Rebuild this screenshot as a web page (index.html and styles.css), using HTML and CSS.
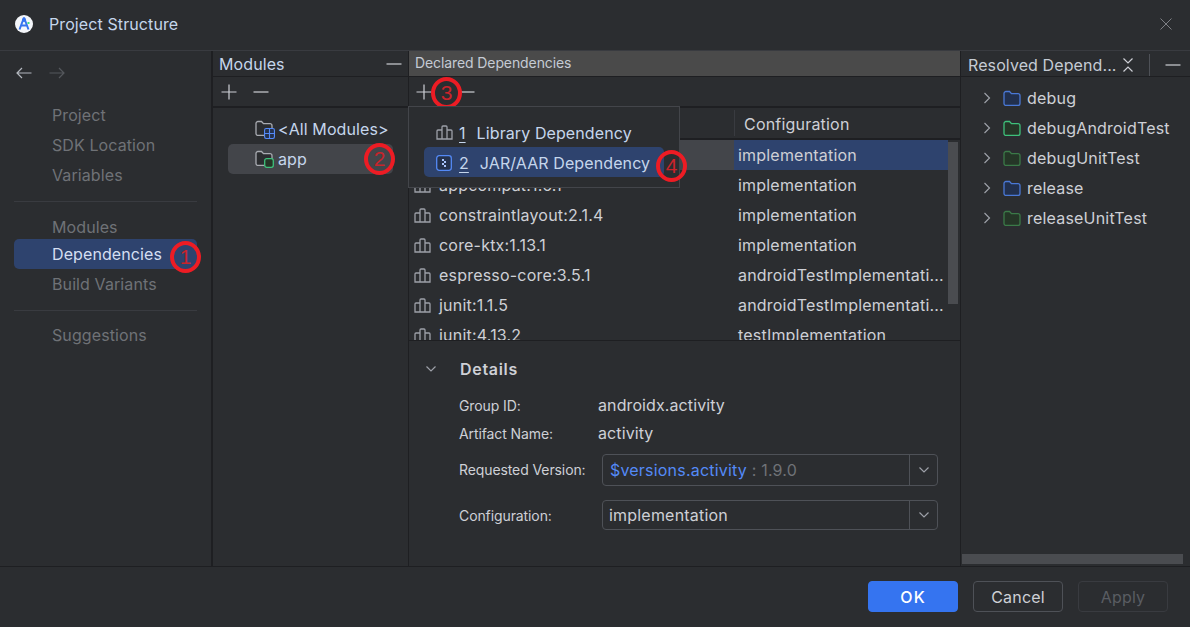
FILE: index.html
```html
<!DOCTYPE html>
<html lang="en">
<head>
<meta charset="utf-8">
<title>Project Structure</title>
<link rel="stylesheet" href="styles.css">
</head>
<body>
<svg class="defs" width="0" height="0" aria-hidden="true">
  <defs>
    <symbol id="lib" viewBox="0 0 17 15"><path d="M1 14V6a1 1 0 0 1 1-1h4V2a1 1 0 0 1 1-1h3a1 1 0 0 1 1 1v3h4a1 1 0 0 1 1 1v8zM6 5v9M11 5v9" fill="none" stroke="currentColor" stroke-width="1.300"/></symbol>
    <symbol id="folder" viewBox="0 0 18 16"><path d="M1 3.500A2 2 0 0 1 3 1.500H6.500l2 2.200h6.500a2 2 0 0 1 2 2v7.800a2 2 0 0 1-2 2H3a2 2 0 0 1-2-2z" fill="var(--fill)" stroke="currentColor" stroke-width="1.300"/></symbol>
    <symbol id="chev" viewBox="0 0 8 12"><path d="M1.500 1l5 5-5 5" fill="none" stroke="currentColor" stroke-width="1.200"/></symbol>
    <symbol id="down" viewBox="0 0 12 8"><path d="M1.500 1.500l4.500 4.500 4.500-4.500" fill="none" stroke="currentColor" stroke-width="1.200"/></symbol>
    <symbol id="plus" viewBox="0 0 16 16"><path d="M8 0.500v15M0.500 8h15" fill="none" stroke="currentColor" stroke-width="1.200"/></symbol>
    <symbol id="minus" viewBox="0 0 16 16"><path d="M0.500 8h15" fill="none" stroke="currentColor" stroke-width="1.200"/></symbol>
  </defs>
</svg>
<div class="window">
  <header class="titlebar">
    <svg class="logo" viewBox="0 0 20 20" width="20" height="20"><circle cx="10" cy="10" r="9" fill="#f4f6fa"/><path d="M10 3.500L5.500 15.500M10 3.500l4.500 12M6.500 11.500h7" fill="none" stroke="#3574f0" stroke-width="2"/><circle cx="10" cy="6" r="2" fill="#3574f0"/><rect x="13.500" y="8" width="2" height="2" fill="#3ddc84"/></svg>
    <span class="title">Project Structure</span>
    <svg class="close" viewBox="0 0 12 12" width="12" height="12"><path d="M.5.500l11 11M11.500.500l-11 11" stroke="#7e8085" fill="none"/></svg>
  </header>
  <main class="main">
    <nav class="sidebar">
      <div class="history">
        <svg viewBox="0 0 16 12" width="16" height="12"><path d="M15.500 6H1M6 1L1 6l5 5" fill="none" stroke="#b4b8bf" stroke-width="1.200"/></svg>
        <svg viewBox="0 0 16 12" width="16" height="12"><path d="M.5 6H15M10 1l5 5-5 5" fill="none" stroke="#55585d" stroke-width="1.200"/></svg>
      </div>
      <ul class="navgroup">
        <li>Project</li><li>SDK Location</li><li>Variables</li>
      </ul>
      <hr class="navsep">
      <ul class="navgroup">
        <li class="navcompact">Modules</li>
        <li class="navactive">Dependencies<span class="mark mark-nav">1</span></li>
        <li>Build Variants</li>
      </ul>
      <hr class="navsep">
      <ul class="navgroup navlast">
        <li>Suggestions</li>
      </ul>
    </nav>

    <section class="modules">
      <div class="panehead">
        <span>Modules</span>
        <svg class="i16 hide-btn" width="16" height="16"><use href="#minus"/></svg>
      </div>
      <div class="toolbar">
        <svg class="i16" width="16" height="16"><use href="#plus"/></svg>
        <svg class="i16" width="16" height="16"><use href="#minus"/></svg>
      </div>
      <ul class="modlist">
        <li class="modrow">
          <span class="modicon">
            <svg class="icon-folder gray" width="18" height="16"><use href="#folder"/></svg>
            <svg class="badge" viewBox="0 0 10 10" width="11" height="11"><rect x=".5" y=".5" width="9" height="9" rx="1.500" fill="#25324d" stroke="#548af7"/><path d="M5 .5v9M.5 5h9" stroke="#548af7"/></svg>
          </span>&lt;All Modules&gt;
        </li>
        <li class="modrow modsel">
          <span class="modicon">
            <svg class="icon-folder gray" width="18" height="16"><use href="#folder"/></svg>
            <svg class="badge" viewBox="0 0 10 10" width="10" height="10"><rect x=".7" y=".7" width="8.600" height="8.600" rx="2" fill="#253627" stroke="#3ec07a" stroke-width="1.300"/></svg>
          </span>app<span class="mark mark-mod">2</span>
        </li>
      </ul>
    </section>

    <section class="declared">
      <div class="dechead">Declared Dependencies</div>
      <div class="dectools">
        <svg class="i16" width="16" height="16"><use href="#plus"/></svg>
        <svg class="i16" width="16" height="16"><use href="#minus"/></svg>
        <span class="mark mark-add">3</span>
      </div>
      <div class="deptable">
        <div class="depheader"><span class="hname"></span><span class="hconf">Configuration</span></div>
        <div class="deprows">
          <div class="dep depsel"><span class="dname"><svg class="lib" width="17" height="15"><use href="#lib"/></svg>activity:1.9.0</span><span class="dconf">implementation</span></div>
          <div class="dep"><span class="dname"><svg class="lib" width="17" height="15"><use href="#lib"/></svg>appcompat:1.6.1</span><span class="dconf">implementation</span></div>
          <div class="dep"><span class="dname"><svg class="lib" width="17" height="15"><use href="#lib"/></svg>constraintlayout:2.1.4</span><span class="dconf">implementation</span></div>
          <div class="dep"><span class="dname"><svg class="lib" width="17" height="15"><use href="#lib"/></svg>core-ktx:1.13.1</span><span class="dconf">implementation</span></div>
          <div class="dep"><span class="dname"><svg class="lib" width="17" height="15"><use href="#lib"/></svg>espresso-core:3.5.1</span><span class="dconf">androidTestImplementati...</span></div>
          <div class="dep"><span class="dname"><svg class="lib" width="17" height="15"><use href="#lib"/></svg>junit:1.1.5</span><span class="dconf">androidTestImplementati...</span></div>
          <div class="dep"><span class="dname"><svg class="lib" width="17" height="15"><use href="#lib"/></svg>junit:4.13.2</span><span class="dconf">testImplementation</span></div>
          <div class="scrollthumb"></div>
        </div>
      </div>
      <div class="details">
        <div class="dettitle"><svg class="dchev" width="12" height="8"><use href="#down"/></svg><strong>Details</strong></div>
        <div class="form">
          <span class="flabel">Group ID:</span><span class="fvalue">androidx.activity</span>
          <span class="flabel">Artifact Name:</span><span class="fvalue">activity</span>
          <span class="flabel flabel-a">Requested Version:</span>
          <div class="combo combo-a"><span class="ctext"><span class="cvar">$versions.activity</span><span class="cdim"> : 1.9.0</span></span><span class="cbtn"><svg width="12" height="8"><use href="#down"/></svg></span></div>
          <span class="flabel">Configuration:</span>
          <div class="combo combo-b"><span class="ctext">implementation</span><span class="cbtn"><svg width="12" height="8"><use href="#down"/></svg></span></div>
        </div>
      </div>
      <div class="popup">
        <div class="popitem"><svg class="lib" width="17" height="15"><use href="#lib"/></svg><span class="popnum">1</span><span>Library Dependency</span></div>
        <div class="popitem popsel">
          <svg class="jar" viewBox="0 0 16 16" width="16" height="16"><rect x=".7" y=".7" width="14.600" height="14.600" rx="2.500" fill="#25324d" stroke="#548af7" stroke-width="1.300"/><path d="M6 4h2v2H6zM8 6h2v2H8zM6 8h2v2H6zM8 10h2v2H8z" fill="#a8c4fb"/></svg>
          <span class="popnum">2</span><span>JAR/AAR Dependency</span><span class="mark mark-jar">4</span>
        </div>
      </div>
    </section>

    <section class="resolved">
      <div class="reshead">
        <span class="restitle">Resolved Depend...</span>
        <svg class="collapse" viewBox="0 0 12 16" width="12" height="16"><path d="M1.500 1.500L6 6l4.500-4.500M1.500 14.500L6 10l4.500 4.500" fill="none" stroke="#ced0d6" stroke-width="1.200"/></svg>
        <span class="resdiv"></span>
        <svg class="i16" width="16" height="16"><use href="#minus"/></svg>
      </div>
      <ul class="restree">
        <li><svg class="tchev" width="8" height="12"><use href="#chev"/></svg><svg class="icon-folder blue" width="18" height="16"><use href="#folder"/></svg>debug</li>
        <li><svg class="tchev" width="8" height="12"><use href="#chev"/></svg><svg class="icon-folder green" width="18" height="16"><use href="#folder"/></svg>debugAndroidTest</li>
        <li><svg class="tchev" width="8" height="12"><use href="#chev"/></svg><svg class="icon-folder dgreen" width="18" height="16"><use href="#folder"/></svg>debugUnitTest</li>
        <li><svg class="tchev" width="8" height="12"><use href="#chev"/></svg><svg class="icon-folder blue" width="18" height="16"><use href="#folder"/></svg>release</li>
        <li><svg class="tchev" width="8" height="12"><use href="#chev"/></svg><svg class="icon-folder dgreen" width="18" height="16"><use href="#folder"/></svg>releaseUnitTest</li>
      </ul>
      <div class="hscroll"></div>
    </section>
  </main>
  <footer class="footer">
    <button class="btn btn-ok">OK</button>
    <button class="btn">Cancel</button>
    <button class="btn btn-off">Apply</button>
  </footer>
</div>
</body>
</html>
```
FILE: styles.css
```css
* { box-sizing: border-box; }
html, body { margin: 0; padding: 0; background: #2b2d30; }
body { font-family: Inter, "Liberation Sans", sans-serif; font-size: 16px; letter-spacing: .1px; color: #ced0d6; overflow: hidden; }
ul { list-style: none; margin: 0; padding: 0; }
.defs { position: absolute; }
svg { display: block; flex: none; }

.window { width: 1190px; height: 627px; display: flex; flex-direction: column; background: #2b2d30; }

.titlebar { height: 51px; flex: none; display: flex; align-items: center; padding: 0 18px 2px 14px; border-bottom: 1px solid #393b40; }
.title { margin-left: 15px; color: #c5d6ec; }
.close { margin-left: auto; }

.main { flex: 1; display: flex; min-height: 0; }

.sidebar { width: 213px; flex: none; border-right: 2px solid #1e1f22; padding: 0 0 0 14px; }
.history { display: flex; gap: 17px; padding: 16px 0 0 2px; height: 49px; }
.navgroup li { height: 30px; line-height: 30px; padding-left: 38px; margin-right: 14px; color: #6f7277; position: relative; }
.navgroup .navcompact { height: 27px; line-height: 30px; }
.navgroup .navactive { background: #2e436e; color: #d4dff2; border-radius: 5px; }
.navlast li { line-height: 28px; }
.navsep { border: 0; height: 1px; background: #393b40; margin: 11px 14px 10px 0; }

.mark { position: absolute; width: 31px; height: 32px; border: 4px solid #ed1c24; border-radius: 50%; color: #c9242b; font-family: "Liberation Sans", sans-serif; font-size: 21px; line-height: 24px; letter-spacing: 0; text-align: center; padding: 0; }
.mark-nav { left: 156px; top: 2px; }
.mark-mod { left: 136px; top: -1px; }
.mark-add { left: 22px; top: 0; }
.mark-jar { left: 232px; top: 3px; }

.modules { width: 196px; flex: none; border-right: 1px solid #1e1f22; display: flex; flex-direction: column; }
.panehead { height: 26px; flex: none; display: flex; align-items: center; justify-content: space-between; padding: 0 6px; border-bottom: 1px solid #1e1f22; color: #c5d6ec; }
.toolbar { height: 31px; flex: none; display: flex; align-items: center; gap: 16px; padding: 0 0 0 8px; border-bottom: 2px solid #1e1f22; }
.i16 { color: #ced0d6; }
.modlist { padding: 6px 15px 0 15px; }
.modrow { height: 30px; display: flex; align-items: center; padding-left: 27px; position: relative; color: #c5d6ec; }
.modsel { background: #43454a; border-radius: 5px; }
.modicon { position: relative; width: 23px; height: 18px; flex: none; }
.icon-folder { --fill: transparent; }
.gray { color: #a8abb1; --fill: #2b2d30; }
.blue { color: #4a78d6; --fill: #22304d; }
.green { color: #3ec07a; --fill: #253627; }
.dgreen { color: #3b7a48; --fill: #253627; }
.badge { position: absolute; left: 9px; top: 8px; }

.declared { flex: 1; min-width: 0; position: relative; display: flex; flex-direction: column; border-right: 1px solid #1e1f22; }
.dechead { height: 26px; flex: none; background: #4a4a4a; color: #c5cbd4; font-size: 14px; letter-spacing: -.1px; line-height: 24px; padding-left: 6px; border-bottom: 1px solid #1e1f22; }
.dectools { height: 31px; flex: none; display: flex; align-items: center; padding-left: 7px; gap: 27px; border-bottom: 2px solid #1e1f22; position: relative; }
.deptable { flex: none; height: 233px; border-bottom: 1px solid #1e1f22; display: flex; flex-direction: column; overflow: hidden; letter-spacing: .2px; }
.depheader { height: 32px; flex: none; display: flex; align-items: center; border-bottom: 2px solid #1e1f22; }
.hname { width: 326px; height: 26px; border-right: 1px solid #393b40; }
.hconf { padding: 2px 0 0 9px; }
.deprows { position: relative; flex: 1; overflow: hidden; }
.dep { height: 30px; display: flex; align-items: center; width: 539px; }
.dname { width: 325px; flex: none; display: flex; align-items: center; gap: 8px; padding-left: 5px; }
.dconf { padding-left: 4px; white-space: nowrap; }
.depsel .dname { background: #43454a; height: 30px; }
.depsel .dconf { background: #2e436e; height: 30px; display: flex; align-items: center; flex: 1; }
.lib { color: #9da0a8; }
.scrollthumb { position: absolute; left: 539px; top: 2px; width: 10px; height: 162px; background: #4a4c50; }

.details { flex: 1; padding: 0 22px 0 16px; }
.dettitle { display: flex; align-items: center; height: 27px; margin-top: 14px; color: #ced0d6; }
.dettitle strong { font-weight: 600; margin-left: 23px; letter-spacing: .7px; }
.dchev { color: #9da0a8; }
.form { display: grid; grid-template-columns: 143px 1fr; grid-template-rows: 28px 28px 53px 30px; margin: 9px 0 0 34px; width: 479px; align-items: center; }
.flabel { font-size: 14px; letter-spacing: -.1px; color: #ced0d6; }
.fvalue { margin-left: -4px; }
.form > .flabel-a { align-self: start; margin-top: 7px; line-height: 32px; }
.combo { display: flex; height: 30px; border: 1px solid #4e5157; border-radius: 4px; }
.form > .combo-a { align-self: start; margin-top: 7px; height: 32px; }
.ctext { flex: 1; padding-left: 7px; display: flex; align-items: center; white-space: pre; letter-spacing: .2px; }
.combo-b .ctext { padding-left: 6px; }
.cvar { color: #548af7; }
.cdim { color: #6f7277; }
.cbtn { width: 28px; border-left: 1px solid #4e5157; display: flex; align-items: center; justify-content: center; color: #9da0a8; }

.popup { position: absolute; left: -1px; top: 55px; width: 272px; height: 82px; background: #2b2d30; border: 1px solid #43454a; padding: 10px 15px 0 15px; }
.popitem { height: 30px; display: flex; align-items: center; padding: 1px 0 0 12px; color: #c5d6ec; position: relative; }
.popsel { background: #2e436e; border-radius: 5px; }
.popnum { text-decoration: underline; margin: 0 11px 0 5px; text-underline-offset: 3px; }
.popitem .lib { margin-right: 1px; }
.popsel .popnum { margin-left: 7px; margin-right: 11px; }

.resolved { width: 229px; flex: none; position: relative; display: flex; flex-direction: column; }
.reshead { height: 26px; flex: none; display: flex; align-items: center; padding: 2px 8px 0 7px; border-bottom: 1px solid #1e1f22; color: #c5cbd4; }
.restitle { width: 153px; white-space: nowrap; }
.collapse { margin-left: 1px; }
.resdiv { width: 1px; height: 22px; background: #4e5157; margin: 0 15px; }
.restree { flex: 1; padding: 6px 0 0 22px; letter-spacing: .2px; }
.restree li { height: 30px; display: flex; align-items: center; color: #ced0d6; }
.tchev { color: #9da0a8; margin-right: 12px; }
.restree .icon-folder { margin-right: 6px; }
.hscroll { height: 10px; margin: 0 7px 2px 1px; background: #4a4c50; }

.footer { height: 61px; flex: none; border-top: 1px solid #1e1f22; display: flex; align-items: flex-start; justify-content: flex-end; padding: 14px 22px 0 0; gap: 15px; }
.btn { width: 90px; height: 31px; border-radius: 4px; border: 1px solid #4e5157; background: #2b2d30; color: #ced0d6; font: 16px Inter, "Liberation Sans", sans-serif; letter-spacing: .2px; padding: 0; }
.btn-ok { background: #3574f0; border-color: #3574f0; color: #fff; font-weight: 500; letter-spacing: 1px; }
.btn-off { border-color: #393b40; color: #5a5d63; }
```
